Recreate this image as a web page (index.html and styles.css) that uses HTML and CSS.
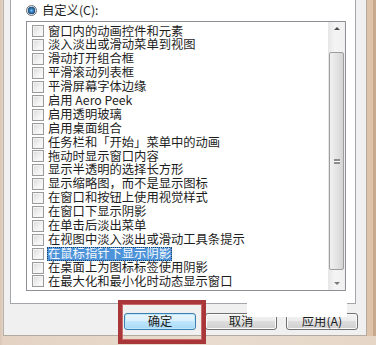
FILE: index.html
```html
<!DOCTYPE html>
<html lang="zh-CN">
<head>
    <meta charset="UTF-8">
    <meta name="viewport" content="width=device-width, initial-scale=1.0">
    <title>视觉效果</title>
    <link rel="stylesheet" href="styles.css">
</head>
<body>

<div class="screen">
    <div class="dialog">
        <div class="panel">
            <label class="custom"><span class="radio"></span><span class="caption">自定义(C):</span></label>

            <div class="listbox">
                <ul class="items">
                    <li><span class="check"></span><span class="text">窗口内的动画控件和元素</span></li>
                    <li><span class="check"></span><span class="text">淡入淡出或滑动菜单到视图</span></li>
                    <li><span class="check"></span><span class="text">滑动打开组合框</span></li>
                    <li><span class="check"></span><span class="text">平滑滚动列表框</span></li>
                    <li><span class="check"></span><span class="text">平滑屏幕字体边缘</span></li>
                    <li><span class="check"></span><span class="text">启用 Aero Peek</span></li>
                    <li><span class="check"></span><span class="text">启用透明玻璃</span></li>
                    <li><span class="check"></span><span class="text">启用桌面组合</span></li>
                    <li><span class="check"></span><span class="text">任务栏和「开始」菜单中的动画</span></li>
                    <li><span class="check"></span><span class="text">拖动时显示窗口内容</span></li>
                    <li><span class="check"></span><span class="text">显示半透明的选择长方形</span></li>
                    <li><span class="check"></span><span class="text">显示缩略图，而不是显示图标</span></li>
                    <li><span class="check"></span><span class="text">在窗口和按钮上使用视觉样式</span></li>
                    <li><span class="check"></span><span class="text">在窗口下显示阴影</span></li>
                    <li><span class="check"></span><span class="text">在单击后淡出菜单</span></li>
                    <li><span class="check"></span><span class="text">在视图中淡入淡出或滑动工具条提示</span></li>
                    <li class="selected"><span class="check"></span><span class="text">在鼠标指针下显示阴影</span></li>
                    <li><span class="check"></span><span class="text">在桌面上为图标标签使用阴影</span></li>
                    <li><span class="check"></span><span class="text">在最大化和最小化时动态显示窗口</span></li>
                </ul>

                <div class="scrollbar">
                    <div class="arrow up"></div>
                    <div class="track">
                        <div class="thumb"><span class="grip"></span></div>
                    </div>
                    <div class="arrow down"></div>
                </div>
            </div>
        </div>

        <div class="buttons">
            <div class="ok-wrap">
                <button class="btn default">确定</button>
                <span class="mark"></span>
            </div>
            <button class="btn">取消</button>
            <button class="btn">应用(A)</button>
        </div>

        <div class="watermark"></div>
    </div>
</div>

</body>
</html>
```

FILE: styles.css
```css
* {
    box-sizing: border-box;
}
body {
    margin: 0;
    font-family: "Noto Sans CJK SC", "Noto Sans", sans-serif;
    font-size: 12.3px;
    color: #1e1e1e;
}
.screen {
    width: 376px;
    height: 345px;
    overflow: hidden;
    padding-left: 3px;
    background: linear-gradient(90deg, #d9c5b2 0, #e4d3c3 3px, #e8dccf 60%, #e6d6c6 100%);
}
.dialog {
    position: relative;
    width: 364px;
    height: 336px;
    padding-left: 6px;
    background: #f0f0f0;
    border-left: 1px solid #b4b0ab;
    border-right: 1px solid #b4aaa0;
    border-bottom: 1px solid #b4aaa0;
    box-shadow: 6px 0 0 #dcc3aa, 9px 0 0 #c9a98d;
}
.panel {
    width: 346px;
    height: 304px;
    background: #fff;
    border: 1px solid #a3a6ab;
    border-top: none;
    padding: 3px 0 0 15px;
}
.custom {
    display: flex;
    align-items: center;
    gap: 5px;
    height: 14px;
}
.caption {
    display: inline-block;
    height: 14px;
    line-height: 14px;
}
.radio {
    width: 11px;
    height: 11px;
    border-radius: 50%;
    border: 1px solid #6f7276;
    background: radial-gradient(circle, #8cc8f0 0, #3a86c4 1.5px, #1d4f80 3.5px, #cfd6dc 4px, #ffffff 100%);
}
.listbox {
    display: flex;
    width: 320px;
    height: 270px;
    margin-top: 4px;
    border: 1px solid #8d9096;
}
.items {
    flex: 1;
    list-style: none;
    margin: 0;
    padding: 2.5px 0 0 5px;
}
.items li {
    display: flex;
    align-items: center;
    gap: 3px;
    height: 13.9px;
    white-space: nowrap;
}
.check {
    flex: none;
    width: 12px;
    height: 12px;
    border: 1px solid #9a9b9c;
    background: linear-gradient(135deg, #d9d9d9 0, #f3f3f3 60%, #ffffff 100%);
    box-shadow: inset 0 0 0 1px #f4f4f4;
}
.text {
    display: inline-block;
    height: 13.9px;
    line-height: 13.9px;
    padding: 0 1px;
}
.selected .text {
    background: #4d93d9;
    color: #f4f8fc;
    outline: 1px dotted #1c3f66;
    outline-offset: -1px;
}
.scrollbar {
    display: flex;
    flex-direction: column;
    width: 17px;
    background: linear-gradient(90deg, #e6e6e6, #f4f4f4 40%, #f0f0f0);
}
.arrow {
    flex: none;
    height: 17px;
    display: flex;
    align-items: center;
    justify-content: center;
}
.arrow::before {
    content: "";
    border-left: 3px solid transparent;
    border-right: 3px solid transparent;
}
.arrow.up::before {
    border-bottom: 3px solid #4d4d4d;
    margin-top: -4px;
}
.arrow.down::before {
    border-top: 3px solid #7a7a7a;
    margin-top: 4px;
}
.track {
    flex: 1;
    padding: 13px 1px 0;
}
.thumb {
    height: 218px;
    border: 1px solid #9e9e9e;
    border-radius: 2px;
    background: linear-gradient(90deg, #f1f1f1, #e4e4e4 50%, #d4d4d4);
    display: flex;
    align-items: center;
    justify-content: center;
}
.grip {
    width: 6px;
    height: 5px;
    border-top: 1px solid #8c8c8c;
    border-bottom: 1px solid #8c8c8c;
    background: linear-gradient(#fff 1px, #8c8c8c 1px, #8c8c8c 2px, #fff 2px);
    background-size: 100% 2px;
    background-position: 0 1px;
}
.buttons {
    display: flex;
    justify-content: flex-end;
    gap: 9px;
    margin-top: 9px;
    padding-right: 8px;
}
.ok-wrap {
    position: relative;
    display: flex;
}
.btn {
    width: 72px;
    height: 17px;
    padding: 0;
    font-family: inherit;
    font-size: 12.3px;
    line-height: 15px;
    color: #1e1e1e;
    border: 1px solid #707070;
    border-radius: 3px;
    background: linear-gradient(#f2f2f2, #ebebeb 50%, #dddddd 50%, #cfcfcf);
    box-shadow: inset 0 0 0 1px #fbfbfb;
}
.btn.default {
    border-color: #3c7fb1;
    background: linear-gradient(#eaf6fd, #d9f0fc 50%, #bee6fd 50%, #a7d9f5);
    box-shadow: inset 0 0 0 1px #bfe7fa;
}
.mark {
    position: absolute;
    left: -6px;
    right: -10px;
    top: -13px;
    bottom: -14px;
    border: 4px solid #a9373a;
    box-shadow: inset 0 0 0 1px #c96a6b;
}
.watermark {
    position: absolute;
    left: 243px;
    top: 300px;
    width: 100px;
    height: 17px;
    background: #fff;
}
```
